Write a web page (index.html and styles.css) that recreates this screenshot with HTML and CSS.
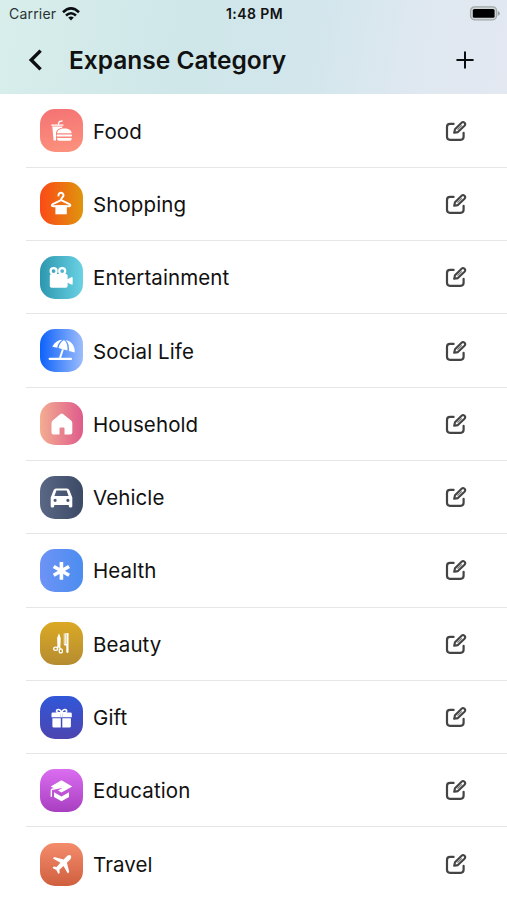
FILE: index.html
```
<!DOCTYPE html>
<html lang="en">
<head>
    <meta charset="UTF-8">
    <meta name="viewport" content="width=device-width, initial-scale=1.0">
    <title>Expanse Category</title>
    <link rel="stylesheet" href="styles.css">
</head>
<body>

<!-- edit icon, shared by all rows -->
<svg class="defs" width="0" height="0">
    <symbol id="edit" viewBox="0 0 22 22">
        <path d="M8.6 3.9H5Q2 3.9 2 6.9V16.8Q2 19.8 5 19.8H15.6Q18.6 19.8 18.6 16.8V12.8" fill="none" stroke="#444" stroke-width="2.2" stroke-linecap="round"/>
        <path d="M9.2 12.8L10 9.3L16.6 2.7Q18 1.3 19.5 2.7Q20.9 4.2 19.5 5.7L12.9 12.1Z" fill="none" stroke="#444" stroke-width="2.1" stroke-linejoin="round"/>
        <path d="M12.4 9.7L16.8 5.3" stroke="#777" stroke-width="1.2"/>
    </symbol>
</svg>

<header class="header">
    <div class="status-bar">
        <div class="carrier">
            <span>Carrier</span>
            <svg width="18" height="14" viewBox="0 0 18 14">
                <g fill="none" stroke="#0b0e10" stroke-width="2.6">
                    <path d="M1 5.2Q9 -2.4 17 5.2"/>
                    <path d="M4 8.5Q9 4 14 8.5"/>
                </g>
                <path d="M6.2 10.6Q9 8.5 11.8 10.6L9 13.6Z" fill="#0b0e10"/>
            </svg>
        </div>
        <div class="time">1:48 PM</div>
        <svg class="battery" width="31" height="15" viewBox="0 0 31 15">
            <rect x="1.6" y="0.8" width="26" height="13" rx="4" fill="#d0d6d8" stroke="#a1a8aa" stroke-width="1.3"/>
            <rect x="3.8" y="3" width="21.8" height="8.8" rx="1.6" fill="#000"/>
            <path d="M28.8 5V9.8Q30.8 9 30.8 7.4Q30.8 5.8 28.8 5Z" fill="#969da0"/>
        </svg>
    </div>
    <div class="title-bar">
        <svg class="back" width="14" height="22" viewBox="0 0 14 22">
            <path d="M11.4 2.8L3.2 11L11.4 19.2" fill="none" stroke="#0b0e10" stroke-width="3.4" stroke-linecap="square" stroke-linejoin="miter"/>
        </svg>
        <h1 class="title">Expanse Category</h1>
        <svg class="add" width="18" height="18" viewBox="0 0 18 18">
            <path d="M9 1.2V16.8M1.2 9H16.8" stroke="#0b0e10" stroke-width="2" stroke-linecap="round"/>
        </svg>
    </div>
</header>

<ul class="list">
    <li class="item">
        <div class="icon food">
            <svg viewBox="0 0 43 43">
                <path d="M11.3 16.2H23.5M18.2 15.5L19.4 12.6L22.6 11.9" fill="none" stroke="#fff" stroke-width="1.3"/>
                <path d="M12.3 17.6H22.3V18.8C18.5 19.4 16 21.5 16 24.2V31.6H13.6Z"/>
                <path d="M17.1 24.2C17.4 21.2 20 19.6 24.3 19.6S31.3 21.2 31.6 24.2Z"/>
                <rect x="16.6" y="25.5" width="15.4" height="2.1" rx="0.8"/>
                <path d="M17.1 28.9H31.6V30Q31.6 31.7 30 31.7H18.7Q17.1 31.7 17.1 30Z"/>
            </svg>
        </div>
        <span class="name">Food</span>
        <svg class="edit"><use href="#edit"/></svg>
    </li>
    <li class="item">
        <div class="icon shopping">
            <svg viewBox="0 0 43 43">
                <path d="M18.5 13.6C18.3 9.9 23.6 9.9 23.5 13.4C23.4 15.3 21.1 15.3 21.1 18.1L12.8 22.2C11.2 23.2 11.8 24.2 13 24.2H29.2C30.4 24.2 31 23.2 29.4 22.2L21.1 18.1" fill="none" stroke="#fff" stroke-width="2" stroke-linejoin="round" stroke-linecap="round"/>
                <path d="M15.4 23.3H26.8V32.3H15.4Z"/>
            </svg>
        </div>
        <span class="name">Shopping</span>
        <svg class="edit"><use href="#edit"/></svg>
    </li>
    <li class="item">
        <div class="icon entertainment">
            <svg viewBox="0 0 43 43">
                <g fill="none" stroke="#fff" stroke-width="2.2">
                    <circle cx="13.6" cy="15.1" r="3"/>
                    <circle cx="22.2" cy="15.1" r="3"/>
                </g>
                <rect x="9.8" y="18" width="17.8" height="13.8" rx="1.8"/>
                <path d="M27 23.4L31.2 21.3H32.7V28.6H31.2L27 26.5Z"/>
            </svg>
        </div>
        <span class="name">Entertainment</span>
        <svg class="edit"><use href="#edit"/></svg>
    </li>
    <li class="item">
        <div class="icon social">
            <svg viewBox="0 0 43 43">
                <path d="M12.3 17.7C14.5 13.4 18 11 22.3 10.8C19.3 13 17.9 15.3 17.2 18.7Z"/>
                <path d="M18.5 19C19.5 15 21.3 12.1 24 11C26.8 13 27.8 17 27.4 21.4Z"/>
                <path d="M25.7 11.1C31.8 12.4 35 17.3 34.8 23.5L29 21.9C29.5 17.6 28.5 13.8 25.7 11.1Z"/>
                <path d="M22.9 20.3L20 29" stroke="#fff" stroke-width="2"/>
                <rect x="8.6" y="28.7" width="23.4" height="2.2" rx="1"/>
            </svg>
        </div>
        <span class="name">Social Life</span>
        <svg class="edit"><use href="#edit"/></svg>
    </li>
    <li class="item">
        <div class="icon household">
            <svg viewBox="0 0 43 43">
                <path d="M20.4 12Q21.7 11 23 12L31.1 18.5Q32.3 19.5 32.3 21V30.4Q32.3 32.4 30.3 32.4H24.5V26.4Q24.5 25.4 23.5 25.4H20.5Q19.5 25.4 19.5 26.4V32.4H13.5Q11.5 32.4 11.5 30.4V21Q11.5 19.5 12.7 18.5Z"/>
            </svg>
        </div>
        <span class="name">Household</span>
        <svg class="edit"><use href="#edit"/></svg>
    </li>
    <li class="item">
        <div class="icon vehicle">
            <svg viewBox="0 0 43 43">
                <path fill-rule="evenodd" d="M16 12.5H27Q28.8 12.5 29.4 14.2L32.3 21.6V30.3Q32.3 31.4 31.2 31.4H29.9Q28.8 31.4 28.8 30.3V28.9H14.2V30.3Q14.2 31.4 13.1 31.4H11.8Q10.7 31.4 10.7 30.3V21.6L13.6 14.2Q14.2 12.5 16 12.5ZM16.4 14.4L14.4 20H28.6L26.6 14.4ZM15.1 22.7A1.6 1.6 0 1 0 15.1 25.9A1.6 1.6 0 1 0 15.1 22.7ZM27.9 22.7A1.6 1.6 0 1 0 27.9 25.9A1.6 1.6 0 1 0 27.9 22.7Z"/>
            </svg>
        </div>
        <span class="name">Vehicle</span>
        <svg class="edit"><use href="#edit"/></svg>
    </li>
    <li class="item">
        <div class="icon health">
            <svg viewBox="0 0 43 43">
                <path d="M21.4 13V30.8M13.7 17.5L29.1 26.3M29.1 17.5L13.7 26.3" stroke="#fff" stroke-width="3.6"/>
            </svg>
        </div>
        <span class="name">Health</span>
        <svg class="edit"><use href="#edit"/></svg>
    </li>
    <li class="item">
        <div class="icon beauty">
            <svg viewBox="0 0 43 43">
                <path d="M19 11.2L20.7 16L20.4 25H17.4L17.1 16Z"/>
                <path d="M18.9 24L16.8 26.5M19 24L20.7 27.5" stroke="#fff" stroke-width="1.4"/>
                <g fill="none" stroke="#fff" stroke-width="1.3">
                    <ellipse cx="15.7" cy="26.8" rx="2" ry="1.6"/>
                    <ellipse cx="20.8" cy="28.9" rx="1.6" ry="2"/>
                </g>
                <path d="M23.8 11.3H24.6V22.5H23.8ZM25.1 11.3H25.9V22.5H25.1ZM26.4 11H28.5V29.8Q28.5 31 27.5 31T26.3 29.8V23.6H25Q23.8 23.6 23.8 22H26.4Z"/>
            </svg>
        </div>
        <span class="name">Beauty</span>
        <svg class="edit"><use href="#edit"/></svg>
    </li>
    <li class="item">
        <div class="icon gift">
            <svg viewBox="0 0 43 43">
                <path d="M21.6 17C20.6 12.7 16.2 12.6 16.6 15.4C16.8 16.7 19 17 21.6 17C24.2 17 26.4 16.7 26.6 15.4C27 12.6 22.6 12.7 21.6 17Z" fill="none" stroke="#fff" stroke-width="1.7"/>
                <path d="M12.8 16.4H20.6V21.3H11.5V17.7Q11.5 16.4 12.8 16.4ZM22.4 16.4H30.4Q31.8 16.4 31.8 17.7V21.3H22.4ZM12.4 22.3H20.8V31.6H13.8Q12.4 31.6 12.4 30.2ZM22.3 22.3H30.9V30.2Q30.9 31.6 29.5 31.6H22.3Z"/>
                <path d="M20.5 16.4H22.5V21.3H20.5Z"/>
            </svg>
        </div>
        <span class="name">Gift</span>
        <svg class="edit"><use href="#edit"/></svg>
    </li>
    <li class="item">
        <div class="icon education">
            <svg viewBox="0 0 43 43">
                <path d="M21.5 11.2L32.2 17.4L21.5 23.6L18 21.6L22.2 18.9L21.4 17.5L15.9 20.3L10.7 17.4Z"/>
                <path d="M14 23.3L21.5 27.6L29 23.3V27.9L21.5 32.3L14 27.9Z"/>
                <path d="M22.4 18.1L12.2 20.2Q11.3 20.5 11.3 22V27.7" fill="none" stroke="#fff" stroke-width="1.4"/>
            </svg>
        </div>
        <span class="name">Education</span>
        <svg class="edit"><use href="#edit"/></svg>
    </li>
    <li class="item">
        <div class="icon travel">
            <svg viewBox="0 0 43 43">
                <path d="M30.7 12.6C29.8 11.7 28.2 12 27 13.1L23.6 16.4L14.3 14L13 15.5L20.4 19.8L16.6 24L13.7 23.6L12.5 24.9L16.3 27L18.4 30.9L19.7 29.7L19.4 26.8L23.5 23L27.8 30.4L29.3 29.1L26.9 19.8L30.2 16.4C31.3 15.2 31.6 13.5 30.7 12.6Z"/>
            </svg>
        </div>
        <span class="name">Travel</span>
        <svg class="edit"><use href="#edit"/></svg>
    </li>
</ul>

</body>
</html>
```

FILE: styles.css
```
* {
    box-sizing: border-box;
}

body {
    font-family: Inter, "Liberation Sans", sans-serif;
    background-color: #fff;
    color: #111;
    margin: 0;
    height: 900px;
    overflow: hidden;
}

.defs {
    display: block;
}

.header {
    height: 94px;
    background: linear-gradient(100deg, #d8eeeb 0%, #cfe7e9 35%, #d2e6ec 60%, #dfe8f0 82%, #e3e8f1 100%);
}

.status-bar {
    display: grid;
    grid-template-columns: 1fr auto 1fr;
    align-items: center;
    height: 27px;
    padding: 0 7px 0 9px;
}

.carrier {
    display: flex;
    align-items: center;
    gap: 6px;
    font-size: 14px;
    letter-spacing: 0.2px;
    color: #2b3234;
}

.time {
    font-size: 14px;
    font-weight: 600;
    letter-spacing: 0.4px;
}

.battery {
    justify-self: end;
}

.title-bar {
    display: flex;
    align-items: center;
    height: 66px;
    padding: 0 33px 0 28px;
}

.title {
    margin: 0 auto 0 27px;
    font-size: 24.5px;
    font-weight: 600;
    line-height: 30px;
}

.list {
    list-style: none;
    margin: 0;
    padding: 0.5px 0 0 26px;
}

.item {
    display: flex;
    align-items: center;
    height: 73.3px;
    padding: 0 40px 0 14px;
    border-bottom: 1px solid #e6e6e6;
}

.item:last-child {
    border-bottom: none;
}

.icon {
    width: 43px;
    height: 43px;
    border-radius: 15px;
}

.icon svg {
    display: block;
    fill: #fff;
}

.name {
    margin: 0 auto 0 10px;
    padding-top: 1px;
    font-size: 20.5px;
    letter-spacing: 0.1px;
}

.edit {
    width: 22px;
    height: 22px;
}

.food {
    background: linear-gradient(170deg, #f47274, #fc937d);
}

.shopping {
    background: linear-gradient(90deg, #fb4a16, #df950d);
}

.entertainment {
    background: linear-gradient(90deg, #2c97af, #6bd2e4);
}

.social {
    background: linear-gradient(90deg, #0d62fb, #9dbdfb);
}

.household {
    background: linear-gradient(90deg, #f3ad91, #df5b8c);
}

.vehicle {
    background: linear-gradient(90deg, #5a6785, #3c4a66);
}

.health {
    background: linear-gradient(90deg, #6d93f5, #4c8df0);
}

.beauty {
    background: linear-gradient(180deg, #dba924, #b58c31);
}

.gift {
    background: linear-gradient(180deg, #3157d8, #4c45b0);
}

.education {
    background: linear-gradient(180deg, #db6df0, #a83fc0);
}

.travel {
    background: linear-gradient(180deg, #f48c6c, #cf5f3f);
}
```
